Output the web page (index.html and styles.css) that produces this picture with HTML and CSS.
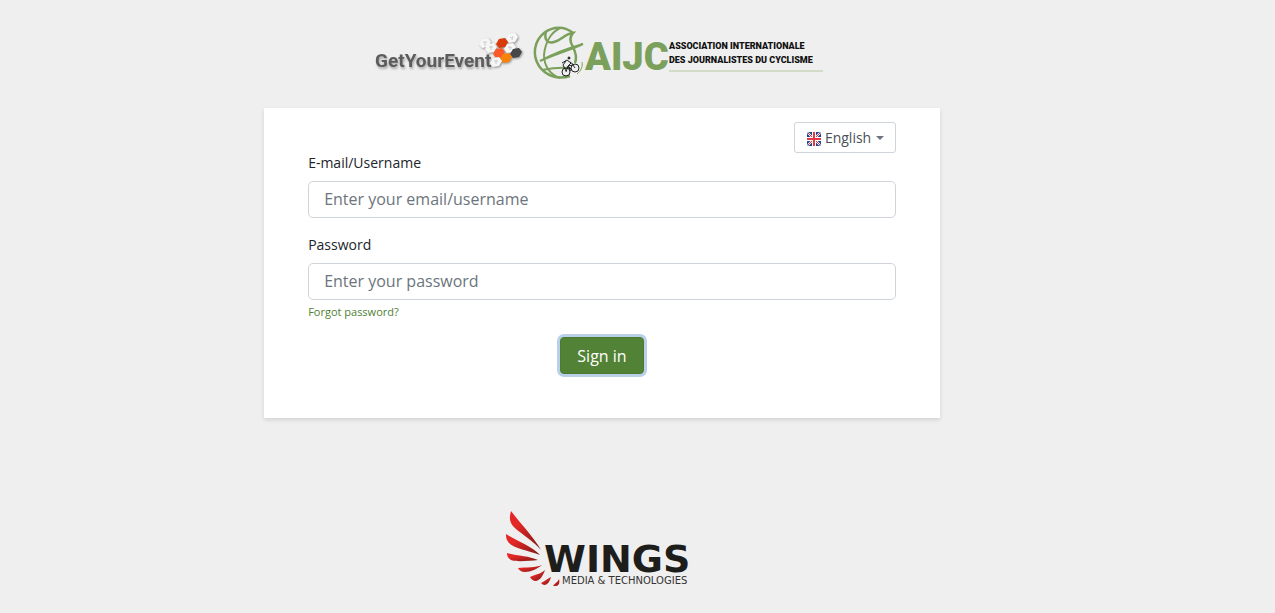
FILE: index.html
```html
<!DOCTYPE html>
<html lang="en">
<head>
    <meta charset="UTF-8">
    <meta name="viewport" content="width=device-width, initial-scale=1.0">
    <title>Sign in</title>
    <link rel="stylesheet" href="styles.css">
</head>
<body>
    <div class="page">
        <header class="logos">
            <svg class="logo" width="153" height="58" viewBox="0 0 153 58" role="img" aria-label="GetYourEvent">
                <defs>
                    <polygon id="hex" points="-6,1 -3,-4 3,-5 6,-1 3,4 -3,5"/>
                </defs>
                <text class="gye-text" x="0" y="43">GetYourEvent</text>
                <g class="hexes">
                    <use href="#hex" x="110" y="19" fill="#f6f6f6"/>
                    <use href="#hex" x="116" y="24" fill="#f6f6f6"/>
                    <use href="#hex" x="137" y="14" fill="#f8f8f8"/>
                    <use href="#hex" x="135" y="24" fill="#f8f8f8"/>
                    <use href="#hex" x="127" y="19" fill="#d93a0b"/>
                    <use href="#hex" x="124" y="29" fill="#fb5b28"/>
                    <use href="#hex" x="141" y="29" fill="#474747"/>
                    <use href="#hex" x="131" y="34" fill="#f98209"/>
                    <use href="#hex" x="121" y="38" fill="#f6f6f6"/>
                </g>
                <path class="hex-marks" d="M108 18h4M110 18v4M114 23h4M116 22v4M135 13l3 2M138 12l-1 4M133 23l4 1M135 22v4M119 37h4M121 36v4"/>
            </svg>
            <svg class="logo" width="301" height="58" viewBox="0 0 301 58" role="img" aria-label="AIJC Association Internationale des Journalistes du Cyclisme">
                <g class="globe">
                    <path stroke-width="2.500" d="M45 9C37 2 25 2 16 9C6 17 4 31 11 42C18 52 30 56 42 52"/>
                    <path stroke-width="2" d="M32 4C22 9 17 20 16 31C16 43 23 51 32 54"/>
                    <path stroke-width="2.500" d="M18 8C16 15 19 20 26 18C34 16 36 10 45 9C41 13 42 18 45 23C48 29 49 34 47 39"/>
                    <path stroke-width="2" d="M12 37C21 32 34 26 55 20C42 26 25 31 12 37M14 46C24 44 33 43 42 44"/>
                    <path d="M49 50C53 47 55 42 54 38"/>
                </g>
                <g class="cyclist">
                    <circle cx="38" cy="48" r="4"/>
                    <circle cx="47" cy="44" r="4"/>
                    <path d="M38 48l2-6 5-1 2 3M40 42l4 4M34 39l5-3 4 3-3 3 3 5M38 37l-3 4 3 6M42 38l4 3"/>
                    <circle cx="41" cy="34" r="1" fill="#222"/>
                </g>
                <text class="aijc-text" x="57" y="46">AIJC</text>
                <text class="aijc-name" x="141" y="25">ASSOCIATION INTERNATIONALE</text>
                <text class="aijc-name" x="141" y="39">DES JOURNALISTES DU CYCLISME</text>
                <path d="M141 47H295" stroke="#b4c8a3"/>
            </svg>
        </header>

        <main class="card">
            <form class="login-form">
                <label class="language">
                    <svg class="flag" width="14" height="14" viewBox="0 0 14 14" aria-hidden="true">
                        <rect width="14" height="14" rx="2" fill="#194a8d"/>
                        <path d="M1 1l12 12M13 1L1 13" stroke="#fff" stroke-width="2"/>
                        <path d="M1 1l12 12M13 1L1 13" stroke="#e63946" stroke-width="1"/>
                        <path d="M7 0v14M0 7h14" stroke="#fff" stroke-width="4"/>
                        <path d="M7 0v14M0 7h14" stroke="#e63946" stroke-width="2"/>
                    </svg>
                    <select class="language-select" aria-label="Language">
                        <option>English</option>
                    </select>
                    <svg class="caret" width="8" height="4" viewBox="0 0 8 4" aria-hidden="true">
                        <path d="M0 0h8L4 4z" fill="#6c757d"/>
                    </svg>
                </label>
                <div class="form-group">
                    <label class="form-label" for="username">E-mail/Username</label>
                    <input class="form-control" type="text" id="username" placeholder="Enter your email/username">
                </div>
                <div class="form-group">
                    <label class="form-label" for="password">Password</label>
                    <input class="form-control" type="password" id="password" placeholder="Enter your password">
                    <a class="forgot" href="#">Forgot password?</a>
                </div>
                <button class="btn" type="submit">Sign in</button>
            </form>
        </main>

        <footer class="footer">
            <svg class="logo" width="200" height="82" viewBox="0 0 200 82" role="img" aria-label="Wings Media &amp; Technologies">
                <defs>
                    <linearGradient id="feather" x1="0" y1="0" x2="1" y2="1">
                        <stop offset="0.300" stop-color="#e32726"/>
                        <stop offset="1" stop-color="#7c1714"/>
                    </linearGradient>
                </defs>
                <g fill="url(#feather)">
                    <path d="M9 3C18 15 31 28 39 42C30 31 12 22 9 15C7 11 8 7 9 3z"/>
                    <path d="M4 26C14 33 30 38 38 47C28 43 11 40 7 35C4 31 4 29 4 26z"/>
                    <path d="M5 45C16 48 27 48 36 52C27 53 13 54 9 52C6 50 5 48 5 45z"/>
                    <path d="M16 60C25 59 33 60 40 57C35 61 29 64 23 64C19 64 17 62 16 60z"/>
                    <path d="M28 69C34 66 39 66 43 62C41 68 38 72 34 73C31 73 29 71 28 69z"/>
                    <path d="M39 75C43 73 45 71 49 69C48 73 46 76 43 77C41 77 40 76 39 75z"/>
                    <path d="M51 78C53 75 56 74 57 71C58 74 57 78 54 78z"/>
                </g>
                <text class="wings-text" x="42" y="64">WINGS</text>
                <text class="wings-tagline" x="60" y="76">MEDIA &amp; TECHNOLOGIES</text>
            </svg>
        </footer>
    </div>
</body>
</html>
```
FILE: styles.css
```css
* {
    box-sizing: border-box;
}

body {
    margin: 0;
    background: #efefef;
    color: #212529;
    font-family: "Open Sans", sans-serif;
    font-size: 14px;
    line-height: 19px;
}

.page {
    display: flex;
    flex-direction: column;
    align-items: center;
    margin-right: 71px;
}

.logos {
    display: flex;
    flex-wrap: wrap;
    justify-content: center;
    padding: 24px 0 26px;
}

.logo {
    display: block;
}

.gye-text {
    font-family: Roboto, sans-serif;
    font-size: 19px;
    font-weight: bold;
    fill: #5c5c5c;
    filter: drop-shadow(1px 2px 1px rgba(0, 0, 0, 0.3));
}

.hexes {
    filter: drop-shadow(1px 1px 1px rgba(0, 0, 0, 0.4));
}

.hex-marks {
    fill: none;
    stroke: #ccc;
}

.globe {
    fill: none;
    stroke: #7ba05b;
}

.cyclist {
    fill: none;
    stroke: #222;
}

.aijc-text {
    font-family: Roboto, sans-serif;
    font-size: 38px;
    font-weight: 900;
    fill: #7ba05b;
}

.aijc-name {
    font-family: Roboto, sans-serif;
    font-size: 9px;
    font-weight: 900;
    fill: #111;
}

.card {
    width: 53vw;
    min-width: 300px;
    padding: 14px 44px 44px;
    background: #fff;
    box-shadow: 0 2px 4px rgba(0, 0, 0, 0.12);
}

.login-form {
    display: flex;
    flex-direction: column;
}

.language {
    display: flex;
    align-items: center;
    align-self: flex-end;
    height: 31px;
    padding: 0 11px 0 12px;
    border: 1px solid #ced4da;
    border-radius: 3px;
}

.flag {
    margin-top: 2px;
}

.language-select {
    appearance: none;
    padding: 0 4px;
    border: none;
    background: none;
    color: #495057;
    font: inherit;
    cursor: pointer;
}

.form-group {
    display: flex;
    flex-direction: column;
    align-items: flex-start;
    margin-bottom: 17px;
}

.form-label {
    margin-bottom: 9px;
}

.form-control {
    width: 100%;
    height: 37px;
    padding: 0 15px 2px;
    border: 1px solid #ced4da;
    border-radius: 5px;
    background: #fff;
    color: #495057;
    font: inherit;
    font-size: 16px;
}

.form-control::placeholder {
    color: #6c757d;
    opacity: 1;
}

.forgot {
    margin-top: 3px;
    color: #4f8132;
    font-size: 11px;
    line-height: 17px;
    text-decoration: none;
}

.btn {
    align-self: center;
    height: 37px;
    padding: 1px 16px 0;
    border: 1px solid #4c7b2f;
    border-radius: 4px;
    background: #528235;
    box-shadow: 0 0 0 3px #bad0e9;
    color: #fff;
    font: inherit;
    font-size: 16px;
    cursor: pointer;
}

.footer {
    padding: 90px 0 23px;
}

.wings-text {
    font-family: "DejaVu Sans", sans-serif;
    font-size: 38px;
    font-weight: bold;
    fill: #1d1d1b;
}

.wings-tagline {
    font-family: "DejaVu Sans", sans-serif;
    font-size: 10px;
    fill: #333;
}
```
